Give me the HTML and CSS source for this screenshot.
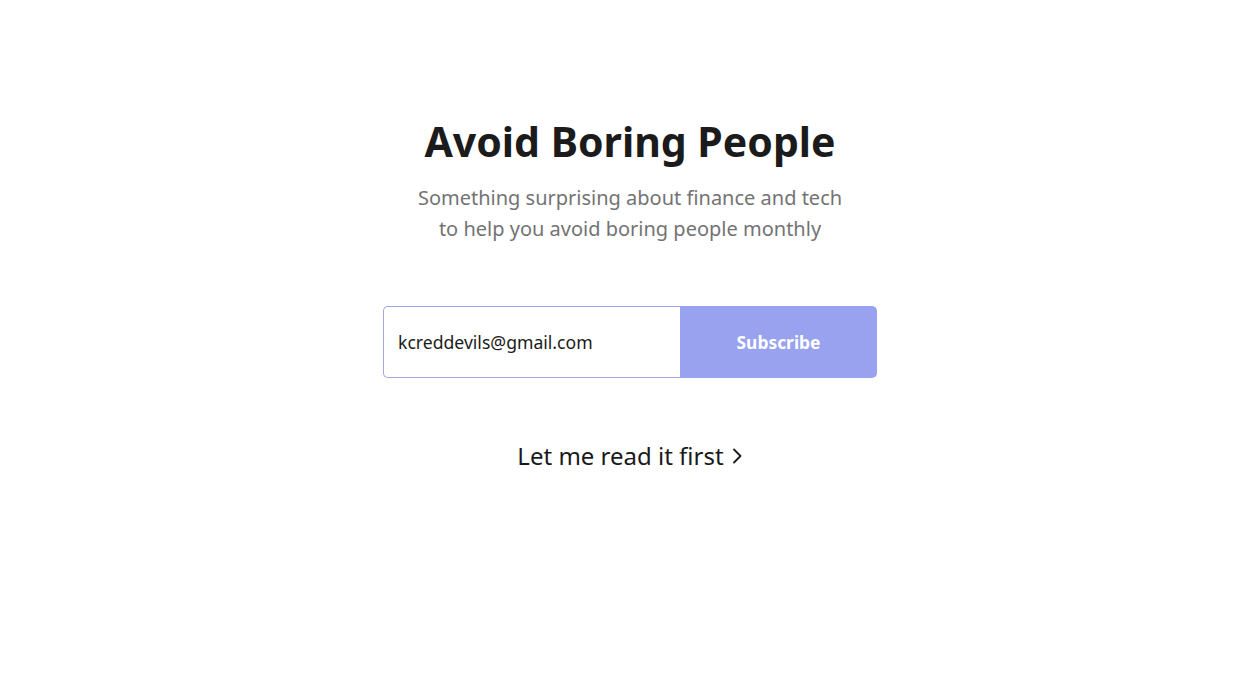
FILE: index.html
```html
<!DOCTYPE html>
<html lang="en">
<head>
<meta charset="utf-8">
<title>Avoid Boring People</title>
<link rel="stylesheet" href="styles.css">
</head>
<body>
<main class="page">
  <h1 class="title">Avoid Boring People</h1>
  <p class="subtitle">Something surprising about finance and tech<br>to help you avoid boring people monthly</p>
  <form class="signup">
    <input class="email" type="email" value="kcreddevils@gmail.com">
    <button class="subscribe" type="button">Subscribe</button>
  </form>
  <a class="read-link" href="#">Let me read it first <svg class="chev" width="12" height="20" viewBox="0 0 12 20"><path d="M3 3.5 L9.5 10 L3 16.5" fill="none" stroke="#1a1a1a" stroke-width="1.8" stroke-linecap="round" stroke-linejoin="round"/></svg></a>
</main>
</body>
</html>
```
FILE: styles.css
```css
html, body {
  margin: 0;
  padding: 0;
  background: #ffffff;
}
body {
  font-family: "Noto Sans", "Open Sans", sans-serif;
  color: #1a1a1a;
}
.page {
  display: flex;
  flex-direction: column;
  align-items: center;
  padding-top: 112px;
}
.title {
  margin: 0;
  font-size: 41px;
  font-weight: 700;
  line-height: 58px;
  color: #1b1b1b;
}
.subtitle {
  margin: 12px 0 0;
  font-size: 20px;
  line-height: 31px;
  color: #737373;
  text-align: center;
}
.signup {
  display: flex;
  margin-top: 62px;
  width: 494px;
  height: 72px;
}
.email {
  box-sizing: border-box;
  width: 297px;
  height: 72px;
  margin: 0;
  padding: 0 0 0 14px;
  border: 1px solid #a3a8e0;
  border-right: none;
  border-radius: 5px 0 0 5px;
  font-family: inherit;
  font-size: 17.6px;
  color: #1a1a1a;
  outline: none;
}
.subscribe {
  flex: 1;
  margin: 0;
  border: none;
  border-radius: 0 5px 5px 0;
  background: #98a2ef;
  color: #ffffff;
  font-family: inherit;
  font-size: 17.4px;
  font-weight: 700;
  cursor: pointer;
}
.read-link {
  display: flex;
  align-items: center;
  gap: 7px;
  margin-top: 62px;
  font-size: 24px;
  line-height: 32px;
  color: #1a1a1a;
  text-decoration: none;
}
.chev {
  display: block;
}
```
